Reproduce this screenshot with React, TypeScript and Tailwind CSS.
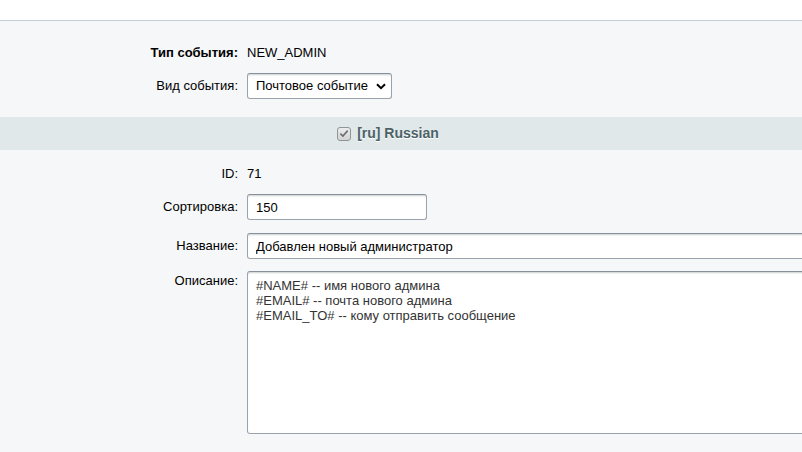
import React from 'react';

const inputCls =
  'h-[26px] rounded-[3px] border border-[#9aa3ad] border-t-[#87919c] bg-white px-[8px] text-[13px] text-black outline-none shadow-[inset_0_2px_2px_-1px_rgba(180,188,191,0.7)]';

function Row({ label, bold, children, top }: { label: string; bold?: boolean; children: React.ReactNode; top?: boolean }) {
  return (
    <div className={`flex ${top ? 'items-start' : 'items-center'}`}>
      <div className={`w-[247px] shrink-0 pr-[9px] text-right ${bold ? 'font-bold' : ''}`}>
        {label}
      </div>
      <div className="flex-1 min-w-0">{children}</div>
    </div>
  );
}

export default function App() {
  return (
    <div className="h-[452px] w-[802px] overflow-hidden bg-white text-[13px] text-black" style={{ fontFamily: '"Liberation Sans", Arial, sans-serif' }}>
      <div className="h-[20px] bg-white" />
      <div className="h-[432px] border-t border-[#c6cfd6] bg-[#f5f7f8]">
        {/* main settings */}
        <div className="flex flex-col pt-[22px]">
          <div className="h-[20px] leading-[20px]">
            <Row label="Тип события:" bold>
              NEW_ADMIN
            </Row>
          </div>
          <div className="mt-[10px]">
            <Row label="Вид события:">
              <div className="relative w-[145px]">
                <select className={`${inputCls} w-full appearance-none pr-[20px]`} defaultValue="mail">
                  <option value="mail">Почтовое событие</option>
                </select>
                <svg className="pointer-events-none absolute right-[6px] top-[10px]" width="10" height="7" viewBox="0 0 10 7">
                  <path d="M1 1.2 L5 5.2 L9 1.2" fill="none" stroke="#000" strokeWidth="2" />
                </svg>
              </div>
            </Row>
          </div>
        </div>

        {/* language heading */}
        <div className="mt-[18px] flex h-[33px] items-center justify-center gap-[6px] bg-[#e0e8ea] pr-[26px] text-[14px] font-bold text-[#4b6267] [text-shadow:0_1px_0_#fff]">
          <span className="flex h-[14px] w-[14px] items-center justify-center rounded-[3px] border border-[#8f9499] bg-gradient-to-b from-[#ececec] to-[#d4d4d4]">
            <svg width="10" height="9" viewBox="0 0 10 9">
              <path d="M1.3 4.6 L3.9 7.1 L8.7 1.6" fill="none" stroke="#6a6f74" strokeWidth="1.6" />
            </svg>
          </span>
          <span>[ru] Russian</span>
        </div>

        {/* language fields */}
        <div className="flex flex-col pt-[14px]">
          <div className="h-[20px] leading-[20px]">
            <Row label="ID:">71</Row>
          </div>
          <div className="mt-[10px]">
            <Row label="Сортировка:">
              <input className={`${inputCls} w-[180px]`} defaultValue="150" />
            </Row>
          </div>
          <div className="mt-[13px]">
            <Row label="Название:">
              <input className={`${inputCls} w-[600px]`} defaultValue="Добавлен новый администратор" />
            </Row>
          </div>
          <div className="mt-[12px]">
            <Row label="Описание:" top>
              <textarea
                className="block h-[163px] w-[600px] resize-none rounded-[3px] border border-[#9aa3ad] border-t-[#87919c] bg-white px-[8px] pt-[6px] text-[13px] leading-[15px] text-[#333] outline-none shadow-[inset_0_2px_2px_-1px_rgba(180,188,191,0.7)]"
                defaultValue={'#NAME# -- имя нового админа\n#EMAIL# -- почта нового админа\n#EMAIL_TO# -- кому отправить сообщение'}
              />
            </Row>
          </div>
        </div>
      </div>
    </div>
  );
}
